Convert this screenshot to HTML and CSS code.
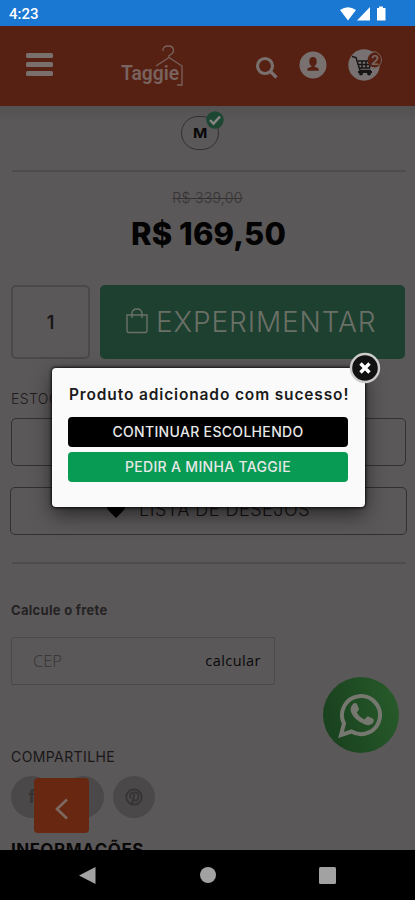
FILE: index.html
```html
<!DOCTYPE html>
<html lang="pt-BR">
<head>
<meta charset="utf-8">
<title>Taggie</title>
<link rel="stylesheet" href="styles.css">
</head>
<body>
<div class="screen">
  <div class="status">
    <span>4:23</span>
    <svg width="50" height="16" viewBox="0 0 50 16"><path d="M1 4Q9-1.500 17 4L9 14.500ZM18 14.500L31 1v13.500ZM38 2h2V.500h4V2h2.500v12.500H38Z" fill="#fff"/></svg>
  </div>
  <header class="header">
    <div class="menu"><i></i><i></i><i></i></div>
    <svg class="logo" width="66" height="46" viewBox="0 0 66 46">
      <text x="1" y="36" textLength="58" lengthAdjust="spacingAndGlyphs">Taggie</text>
      <path d="M43 7q-.500-5 5.500-5 5 0 5 4.500 0 3-4.500 5v2L36 22M49 13.500L62 22v19h-5" fill="none" stroke="#79635e" stroke-width="1.300"/>
    </svg>
    <svg class="search" width="24" height="24" viewBox="0 0 24 24"><circle cx="10" cy="10" r="7.500"/><path d="M15.500 15.500L21.500 21.500"/></svg>
    <svg class="user" width="28" height="28" viewBox="0 0 28 28"><circle cx="14" cy="14" r="13.500" fill="#78716f"/><ellipse cx="14" cy="10.500" rx="3.700" ry="4.500" fill="#562012"/><path d="M12.600 13h2.800v2.500l4.200 2v2.200H8.400v-2.200l4.200-2Z" fill="#562012"/></svg>
    <svg class="cart" width="38" height="34" viewBox="0 0 38 34"><circle cx="16" cy="17" r="15.700" fill="#777271"/><path d="M4 8.500l4 1 4 13h11M10 13h13l-1.500 7H11M10.500 16.500H22M14 13v7M18 13v7" fill="none" stroke="#171515" stroke-width="1.500"/><path d="M10 23h14v2H10Z" fill="#171515"/><circle cx="13" cy="25.500" r="2" fill="#171515"/><circle cx="21" cy="25.500" r="2" fill="#171515"/><circle cx="27" cy="12" r="7.500" fill="#562012"/><path d="M25 3.500a8.500 8.500 0 1 1 0 17" fill="none" stroke="#76635e" stroke-width="1"/><text x="27" y="16.500" text-anchor="middle">2</text></svg>
  </header>
  <main class="page">
    <div class="size"><span>M</span><svg width="18" height="18" viewBox="0 0 18 18"><circle cx="9" cy="9" r="8.700" fill="#1d4732"/><path d="M4 9l3.500 3.700L14 5.500" fill="none" stroke="#858584" stroke-width="2.500"/></svg></div>
    <hr>
    <div class="old">R$ 339,00</div>
    <div class="price">R$ 169,50</div>
    <div class="buy">
      <div class="qty">1</div>
      <div class="try"><svg width="24" height="27" viewBox="0 0 24 27"><path d="M2 8h20v15.500q0 2-2 2H4q-2 0-2-2ZM7 11V7q0-5 5-5t5 5v4" fill="none" stroke="#6b7067" stroke-width="1.400"/></svg><span>EXPERIMENTAR</span></div>
    </div>
    <div class="stock">ESTOQUE</div>
    <div class="box"></div>
    <div class="box wish"><svg width="20" height="18" viewBox="0 0 20 18"><path d="M10 17L2 9Q-1 4 3 1.500T10 4Q13-.500 17 1.500T18 9Z" fill="#050505"/></svg><span>LISTA DE DESEJOS</span></div>
    <hr>
    <div class="freight">Calcule o frete</div>
    <div class="cep"><span>CEP</span><b>calcular</b></div>
    <div class="share">COMPARTILHE</div>
    <div class="social">
      <div><span class="fb">f</span></div><div></div>
      <div><svg width="18" height="18" viewBox="0 0 18 18" fill="none" stroke="#353333" stroke-width="1.800"><circle cx="9" cy="9" r="7.700"/><path d="M7 16L9.500 6M5.700 10.500Q3.500 5 9 4.500t4.500 4.700T8.500 11.500"/></svg></div>
    </div>
    <div class="info">INFORMAÇÕES</div>
  </main>
  <nav class="nav">
    <svg width="415" height="50" viewBox="0 0 415 50" fill="#a2a2a2"><path d="M79 25.500L95.500 17v17Z"/><circle cx="208" cy="25" r="8"/><rect x="319" y="17" width="17" height="17" rx="1.500"/></svg>
  </nav>
  <div class="whats"><svg width="46" height="46" viewBox="0 0 46 46"><path d="M3 43l3-11.500a19 19 0 1 1 7.500 8Z" fill="none" stroke="#76786f" stroke-width="4"/><path d="M15 12q2-2 4 0l2 5q0 1-2.200 3.500 3 5 7.700 7l2.500-2.800q1-.700 2 0l4.500 2.300q1 1-.500 4-3 3.300-8 1.500Q16 28 13 20q-1.300-5 2-8" fill="#76786f"/></svg></div>
  <div class="back"><svg width="16" height="22" viewBox="0 0 16 22"><path d="M13 1.500L3 11l10 9.500" fill="none" stroke="#7d6962" stroke-width="2.600"/></svg></div>
  <section class="modal">
    <h2>Produto adicionado com sucesso!</h2>
    <div class="btn">CONTINUAR ESCOLHENDO</div>
    <div class="btn green">PEDIR A MINHA TAGGIE</div>
    <svg class="close" width="32" height="32" viewBox="0 0 32 32"><circle cx="16" cy="16" r="14" fill="#111" stroke="#cecccb" stroke-width="2.400"/><path d="M11.500 11.500l9 9M20.500 11.500l-9 9" stroke="#fff" stroke-width="3.400"/></svg>
  </section>
</div>
</body>
</html>
```
FILE: styles.css
```css
* { box-sizing: border-box; }
body { margin: 0; font-family: Inter, "Liberation Sans", sans-serif; }
svg { display: block; flex: none; }
.screen { position: relative; width: 415px; height: 900px; overflow: hidden; background: #5b5859; display: flex; flex-direction: column; white-space: nowrap; }
.status { height: 26px; flex: none; background: #1a77d2; color: #fff; display: flex; justify-content: space-between; align-items: center; padding: 2px 25px 0 9px; font: 500 15px Roboto, sans-serif; }
.status svg { margin: -1px 1px 0 0; }
.header { height: 80px; flex: none; background: #562012; display: flex; align-items: flex-start; padding-left: 26px; }
.menu { width: 27px; margin-top: 27px; display: flex; flex-direction: column; gap: 4px; }
.menu i { height: 5px; border-radius: 1.500px; background: #79706e; }
.logo { margin: 18px 0 0 67px; }
.logo text { font: 600 20px Roboto, sans-serif; fill: #79635e; }
.search { margin: 30px 0 0 69px; fill: none; stroke: #79706e; stroke-width: 3.200; }
.user { margin: 25px 0 0 20px; }
.cart { margin: 22px 0 0 21px; }
.cart text { font: 700 13px Inter, sans-serif; fill: #79635e; }
.page { height: 744px; flex: none; overflow: hidden; padding: 10px 9px 0 11px; background: linear-gradient(#545152, #5b5859 16px); }
.size { position: relative; width: 38px; height: 34px; margin-left: 170px; border: 1px solid #323031; border-radius: 17px; display: flex; align-items: center; justify-content: center; font-weight: 700; font-size: 13.500px; color: #080808; }
.size span { transform: scaleX(1.14); }
.size svg { position: absolute; left: 24px; top: -6px; }
hr { height: 2px; border: 0; margin: 20px 0 0 1px; background: #4f4c4d; }
.old { height: 22px; margin-top: 15px; margin-right: 2px; text-align: center; line-height: 22px; font-size: 14px; font-weight: 300; letter-spacing: .3px; color: #353334; text-decoration: line-through; }
.price { height: 40px; margin-top: 5px; text-align: center; line-height: 40px; font-size: 31px; font-weight: 800; letter-spacing: .1px; color: #030303; }
.buy { display: flex; gap: 10px; margin-top: 31px; }
.qty { width: 79px; height: 74px; border: 2px solid #4a4849; border-radius: 5px; display: flex; align-items: center; justify-content: center; font-size: 18px; font-weight: 600; color: #171516; }
.try { width: 305px; height: 74px; border-radius: 5px; background: #1e4030; display: flex; align-items: center; padding-left: 25px; gap: 7px; color: #6b7067; font-size: 28px; font-weight: 300; letter-spacing: .9px; }
.try svg { margin-top: -3px; }
.stock { height: 20px; margin-top: 30px; line-height: 20px; font-size: 14px; font-weight: 300; letter-spacing: .4px; color: #1e1c1d; }
.box { width: 395px; height: 48px; margin-top: 9px; border: 1px solid #323031; border-radius: 5px; }
.wish { width: 397px; margin: 21px 0 0 -1px; display: flex; align-items: center; gap: 13px; padding: 0 0 3px 95px; font-size: 18px; font-weight: 300; letter-spacing: .5px; color: #141213; }
.wish + hr { margin-top: 27px; }
.freight { height: 20px; margin-top: 36px; line-height: 20px; font-size: 13px; font-weight: 700; letter-spacing: .3px; color: #242223; }
.cep { width: 264px; height: 48px; margin: 17px 0 0; border: 1px solid #4b494a; border-radius: 2px; display: flex; align-items: center; justify-content: space-between; padding: 0 13px 1px 21px; font-family: "Open Sans", sans-serif; font-size: 16.500px; font-weight: 300; color: #353334; }
.cep b { font-size: 14.500px; font-weight: 500; letter-spacing: .45px; color: #090809; }
.share { height: 20px; margin-top: 62px; line-height: 20px; font-size: 14px; font-weight: 400; letter-spacing: .4px; color: #191718; }
.social { display: flex; gap: 9px; margin-top: 9px; }
.social div { width: 42px; height: 42px; border-radius: 50%; background: #4a4849; display: flex; align-items: center; justify-content: center; }
.fb { font-size: 17px; font-weight: 700; color: #353333; }
.info { margin-top: 20px; font-size: 17px; font-weight: 700; letter-spacing: .55px; line-height: 24px; color: #080808; }
.nav { height: 50px; background: #000; }
.whats { position: absolute; left: 323px; top: 677px; width: 76px; height: 76px; border-radius: 50%; background: linear-gradient(75deg, #173e1c, #285c2b); display: flex; align-items: center; justify-content: center; }
.back { position: absolute; left: 34px; top: 778px; width: 55px; height: 55px; border-radius: 4px; background: #672711; display: flex; align-items: center; justify-content: center; padding-top: 6px; }
.modal { position: absolute; left: 52px; top: 368px; width: 313px; height: 139px; border-radius: 4px; background: #fafafa; padding: 16px 17px 0 16px; box-shadow: 0 0 3px 1px rgba(0,0,0,.8), 0 8px 20px rgba(0,0,0,.55); }
.modal h2 { height: 22px; margin: 0 0 11px 1px; line-height: 22px; font-size: 15.500px; font-weight: 600; letter-spacing: .86px; color: #1b1b1b; }
.btn { height: 30px; border-radius: 4px; background: #000; color: #e8e8e8; margin-bottom: 5px; line-height: 30px; text-align: center; font-size: 14px; font-weight: 500; letter-spacing: .32px; }
.green { background: #089b54; }
.close { position: absolute; left: 297px; top: -16px; }
```
